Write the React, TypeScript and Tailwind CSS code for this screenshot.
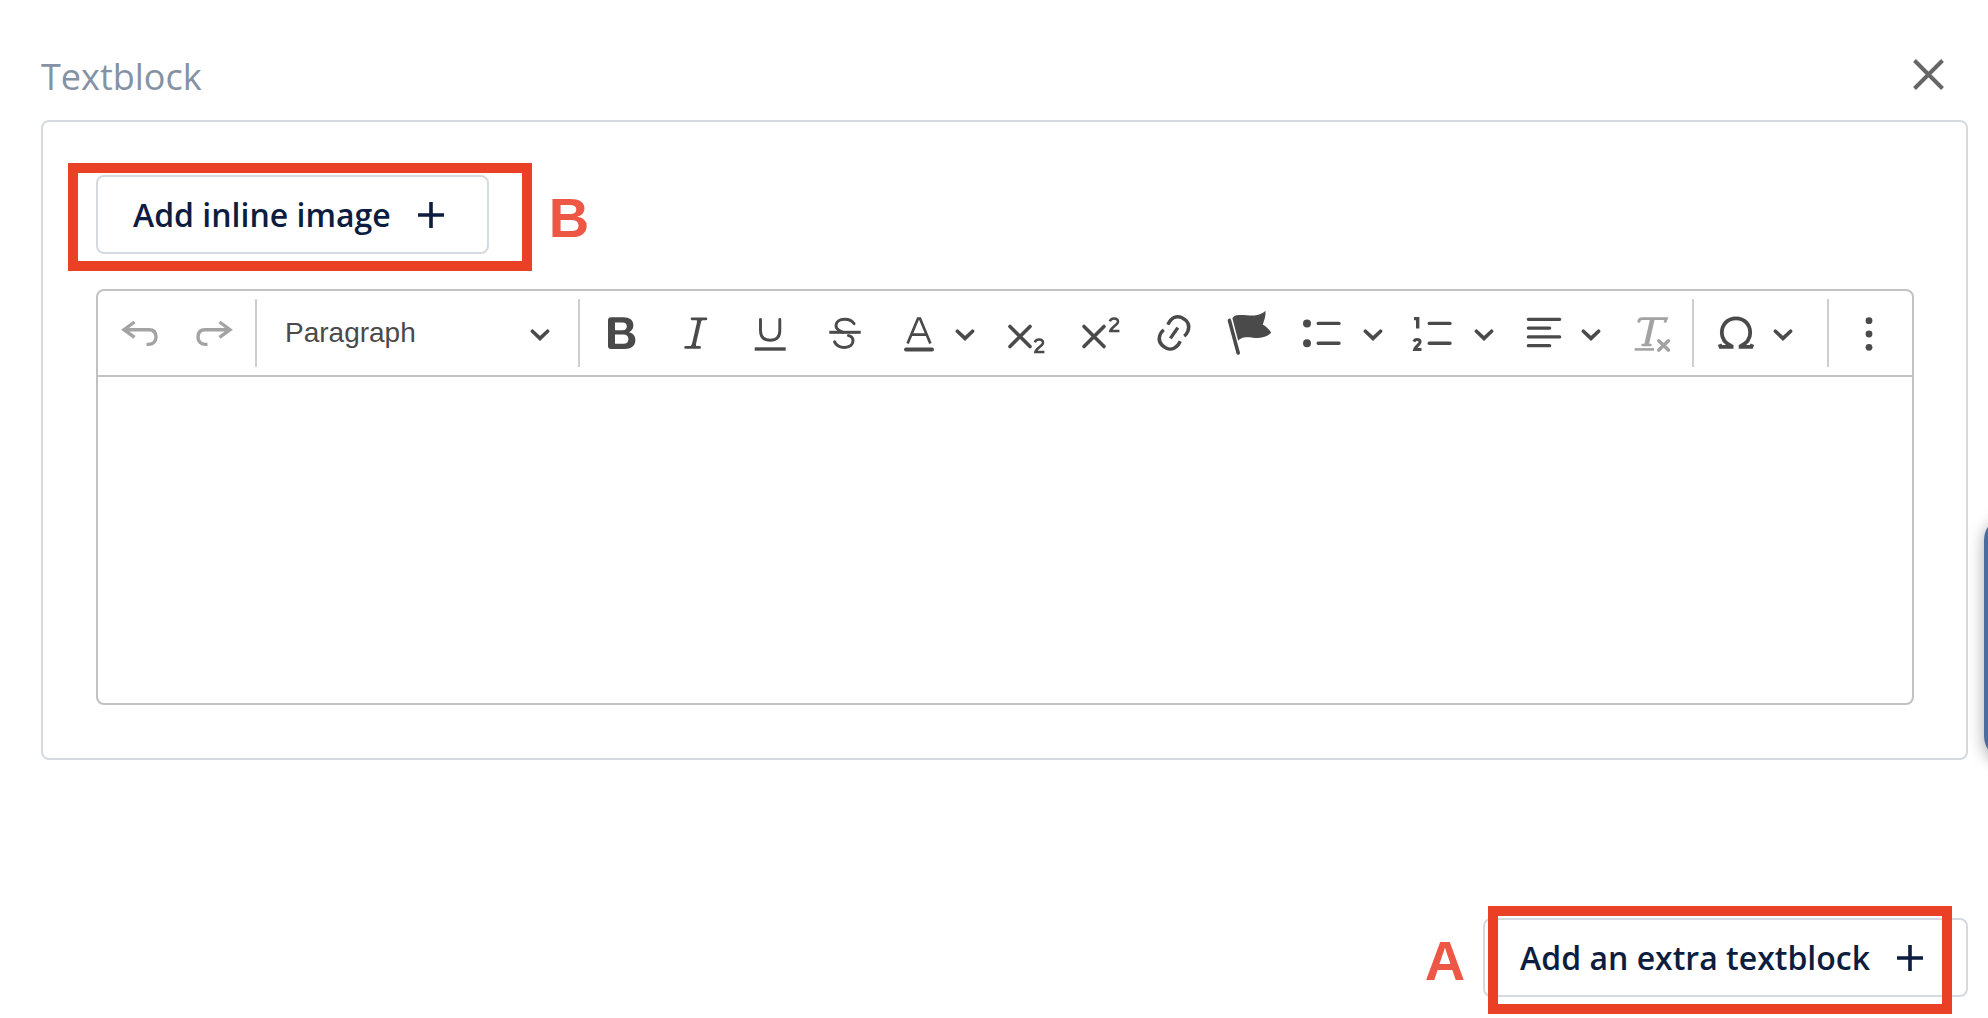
import { useState } from "react";
import type { ReactNode } from "react";
import clsx from "clsx";

const UNDO_PATH = "M20.5 15L10 22.7L20.5 30.4M11 22.7H35C40 22.7 42 26 42 30C42 34.5 39 37.4 34.5 37.4H32.5";

interface IconProps {
  children: ReactNode;
  className?: string;
}

function Icon({ children, className }: IconProps) {
  return (
    <svg
      viewBox="0 0 52 52"
      className={clsx("size-[52px] shrink-0", className)}
      fill="none"
      stroke="currentColor"
      strokeWidth={3.4}
      aria-hidden="true"
    >
      {children}
    </svg>
  );
}

function Chevron() {
  return (
    <svg
      viewBox="0 0 20 52"
      className="h-[52px] w-5 shrink-0"
      fill="none"
      stroke="currentColor"
      strokeWidth={3.6}
      strokeLinecap="round"
      aria-hidden="true"
    >
      <path d="M2.4 24.2L10 31.4L17.6 24.2" />
    </svg>
  );
}

function PlusIcon() {
  return (
    <svg viewBox="0 0 26 26" className="size-[26px] shrink-0" stroke="currentColor" strokeWidth={3.6} aria-hidden="true">
      <path d="M13 0V26M0 13H26" />
    </svg>
  );
}

interface ToolProps {
  label: string;
  children: ReactNode;
  disabled?: boolean;
  wide?: boolean;
}

function Tool({ label, children, disabled, wide }: ToolProps) {
  return (
    <button
      type="button"
      aria-label={label}
      disabled={disabled}
      className={clsx(
        "flex h-[68px] shrink-0 items-center justify-center",
        wide ? "w-[78px]" : "w-[74px]",
        disabled ? "text-[#a3a3a3]" : "text-[#4a4a4a]"
      )}
    >
      {children}
    </button>
  );
}

function SplitTool({ label, children, wide }: ToolProps) {
  return (
    <div className="flex shrink-0">
      <Tool label={label} wide={wide}>
        {children}
      </Tool>
      <button
        type="button"
        aria-label={`${label} options`}
        className={clsx("flex h-[68px] items-center text-[#4a4a4a]", wide ? "w-[33px]" : "w-[34px]")}
      >
        <Chevron />
      </button>
    </div>
  );
}

function Toolbar() {
  const [format, setFormat] = useState("Paragraph");

  return (
    <div className="flex h-[86px] items-center border-b-2 border-[#c2c2c2] text-[#4a4a4a]">
      {/* History */}
      <div className="flex pr-1 pl-[5px]">
        <Tool label="Undo" disabled>
          <Icon>
            <path d={UNDO_PATH} />
          </Icon>
        </Tool>
        <Tool label="Redo" disabled>
          <Icon className="-scale-x-100">
            <path d={UNDO_PATH} />
          </Icon>
        </Tool>
      </div>

      {/* Block format */}
      <div className="relative h-[68px] w-[323px] shrink-0 border-l-2 border-[#cdcdd2]">
        <select
          aria-label="Block format"
          value={format}
          onChange={(e) => setFormat(e.target.value)}
          className="h-full w-full appearance-none bg-transparent pl-7 font-['Liberation_Sans',sans-serif] text-[28px] focus:outline-none"
        >
          <option>Paragraph</option>
          <option>Heading 1</option>
          <option>Heading 2</option>
        </select>
        <span className="pointer-events-none absolute inset-y-0 right-7 flex items-center">
          <Chevron />
        </span>
      </div>

      {/* Formatting */}
      <div className="flex border-l-2 border-[#cdcdd2] pl-[5px] pr-[3px]">
        <Tool label="Bold">
          <Icon>
            <path
              d="M15 10.3H27.5C33.5 10.3 37.4 13 37.4 18.3C37.4 21.6 35.8 24 33 25.2C37 26.2 39.4 29 39.4 33C39.4 39 35 42 28.6 42H15Q12 42 12 39V13.3Q12 10.3 15 10.3ZM19 15.4V23.2H26.6C29.4 23.2 30.8 21.8 30.8 19.3S29.4 15.4 26.6 15.4ZM19 27.6V36.8H27.4C30.6 36.8 32.4 35.2 32.4 32.2S30.6 27.6 27.4 27.6Z"
              fill="currentColor"
              fillRule="evenodd"
              stroke="none"
            />
          </Icon>
        </Tool>
        <Tool label="Italic">
          <Icon>
            <path d="M22 11.8H36M15.6 40.4H29.6" strokeWidth={2.7} strokeLinecap="round" />
            <path d="M26 12H33.6C31.8 13 31.2 14 30.8 16L26.2 36C25.8 38 26 39.4 27 40.4H18.4C20.6 39.6 21.6 38.4 22.2 36L26.8 16C27.2 14 27 13 26 12Z" fill="currentColor" stroke="none" />
          </Icon>
        </Tool>
        <Tool label="Underline">
          <Icon>
            <path d="M16.5 12.4V23.5C16.5 29.8 20 33.2 26.2 33.2S35.8 29.8 35.8 23.5V12.4" strokeWidth={2.9} strokeLinecap="round" />
            <path d="M10.7 42H41.7" />
          </Icon>
        </Tool>
        <Tool label="Strikethrough">
          <Icon>
            <path d="M36 16.6C34.2 13.6 30.6 12.2 26.6 12.2C21.6 12.2 18 14.8 18 18.6C18 21.6 20 23.8 25 25.4M30.5 28.6C33.6 29.2 35 31 35 33.6C35 37.8 31.4 40.4 26.6 40.4C22 40.4 18.2 38.4 16.6 34.8" strokeWidth={3} strokeLinecap="round" />
            <path d="M11.3 25.3H42.7" strokeWidth={3} />
          </Icon>
        </Tool>
        <SplitTool label="Text color">
          <Icon>
            <path d="M15.6 36.6L26 11.6H28L38.4 36.6M18.6 27.6H35.4" strokeWidth={2.7} />
            <path d="M14 42.6H40" strokeWidth={4} strokeLinecap="round" />
          </Icon>
        </SplitTool>
        <Tool label="Subscript">
          <Icon>
            <path d="M10 19.5L30 39.5M30 19.5L10 39.5" strokeWidth={3.6} strokeLinecap="round" />
            <path d="M34.8 35.4C35.4 33.4 36.8 32.5 39 32.5C41.4 32.5 43 33.8 43 35.8C43 39 36.4 41 35.4 45H44.4" strokeWidth={2.5} />
          </Icon>
        </Tool>
        <Tool label="Superscript">
          <Icon>
            <path d="M10 19.5L30 39.5M30 19.5L10 39.5" strokeWidth={3.6} strokeLinecap="round" />
            <path d="M35.8 14.4C36.4 12.4 37.8 11.5 40 11.5C42.4 11.5 44 12.8 44 14.8C44 18 37.4 20 36.4 24H45.4" strokeWidth={2.5} />
          </Icon>
        </Tool>
        <Tool label="Insert link">
          <Icon>
            <path d="M19.8 17.6C23 10.6 28.6 8 34 10.8C40 14 42 19 39.8 24.4C39 26.4 37.6 28.2 36.2 29.2M32.3 34.2C29 41.2 23.4 43.8 18 41C12 37.8 10 32.8 12.2 27.4C13 25.4 14.4 23.8 15.8 22.8M29.8 20.6L22.4 31.4" strokeWidth={3.4} />
          </Icon>
        </Tool>
        <Tool label="Anchor">
          <Icon>
            <path d="M7.4 13.4L16.2 46" strokeWidth={3.6} strokeLinecap="round" />
            <path d="M10.4 11.2C11.8 9 13.6 8.2 16.6 8C22.6 7.4 31.4 9.8 37 7.6C39.8 6.6 41.8 5.4 43.4 3.8C44 9.4 42.2 13.2 40.8 17.6C43.6 19.4 47.4 22.4 49.2 25.6C47.2 28.2 43.6 29.8 39.8 30.6C33.6 31.8 27.6 29.2 21.8 30.6C19.4 31.2 17.6 32.2 16.2 33.8Z" fill="currentColor" stroke="none" />
          </Icon>
        </Tool>
        <SplitTool label="Bullet list" wide>
          <Icon>
            <circle cx="9" cy="16.4" r="4" fill="currentColor" stroke="none" />
            <circle cx="9" cy="36.3" r="4" fill="currentColor" stroke="none" />
            <path d="M20.2 16.4H41M20.2 36.3H41" strokeLinecap="round" />
          </Icon>
        </SplitTool>
        <SplitTool label="Numbered list" wide>
          <Icon>
            <path d="M20.2 16.4H41M20.2 36.3H41" strokeLinecap="round" />
            <path d="M5 11.6H8.7V21.5" strokeWidth={3.4} />
            <path d="M4.9 34.6C5.5 33 6.5 32.6 8.1 32.6C9.9 32.6 11.1 33.4 11.1 35C11.1 37.4 6.7 39.2 5.7 42.4H12.5" strokeWidth={3} />
          </Icon>
        </SplitTool>
        <SplitTool label="Align">
          <Icon>
            <path d="M10.3 12.3H41.7M10.3 21.1H31.7M10.3 29.9H41.7M10.3 38.7H31.7" strokeWidth={3.2} strokeLinecap="round" />
          </Icon>
        </SplitTool>
        <Tool label="Clear formatting" disabled>
          <Icon>
            <path d="M12.6 15.6C12.8 12.8 13.6 11.6 16 11.6H40.4L38.8 15.6" strokeWidth={2.8} />
            <path d="M26.4 12L20.6 37.6" strokeWidth={4.6} />
            <path d="M16.6 38H24.4" strokeWidth={2.6} strokeLinecap="round" />
            <path d="M8.7 42.4H28" strokeWidth={2.6} />
            <path d="M32.8 33.8L42.4 43M42.4 33.8L32.8 43" strokeWidth={3.6} strokeLinecap="round" />
          </Icon>
        </Tool>
      </div>

      {/* Special characters */}
      <div className="flex border-l-2 border-[#cdcdd2] pl-[5px] pr-5">
        <SplitTool label="Special character">
          <Icon>
            <path d="M9.6 37.2L10.6 39.8H21.6V39.2C14.6 36 11.8 31.4 11.8 25.8C11.8 17.4 17.8 11.4 26 11.4S40.2 17.4 40.2 25.8C40.2 31.4 37.4 36 30.6 39.2V39.8H41.4L42.4 37.2" strokeWidth={3.8} />
          </Icon>
        </SplitTool>
      </div>

      {/* Overflow */}
      <div className="flex grow border-l-2 border-[#cdcdd2] pl-[3px]">
        <Tool label="More">
          <Icon>
            <g fill="currentColor" stroke="none">
              <circle cx="26" cy="13.7" r="3.4" />
              <circle cx="26" cy="27" r="3.4" />
              <circle cx="26" cy="40.3" r="3.4" />
            </g>
          </Icon>
        </Tool>
      </div>
    </div>
  );
}

interface AddButtonProps {
  label: string;
}

function AddButton({ label }: AddButtonProps) {
  return (
    <button
      type="button"
      className="flex h-[79px] items-center gap-[27px] rounded-lg border-2 border-[#d5dae0] bg-white pl-[35px] pr-[43px] text-[32px] font-semibold whitespace-nowrap text-[#0c1d40]"
    >
      {label}
      <PlusIcon />
    </button>
  );
}

export default function App() {
  const [content, setContent] = useState("");

  return (
    <div className="relative overflow-hidden bg-white pt-11 pr-5 pb-[21px] pl-[41px] font-['Open_Sans',sans-serif]">
      <header className="flex h-[76px] items-start justify-between pr-6">
        <h1 className="text-[36px] leading-[66px] text-[#8592a3]">Textblock</h1>
        <button type="button" aria-label="Close" className="mt-[15px] text-[#666666]">
          <svg viewBox="0 0 31 31" className="size-[31px]" stroke="currentColor" strokeWidth={4} aria-hidden="true">
            <path d="M1.5 1.5L29.5 29.5M29.5 1.5L1.5 29.5" />
          </svg>
        </button>
      </header>

      <main>
        <section className="rounded-lg border-2 border-[#d5dae0] py-[53px] pr-[52px] pl-[53px]">
          <div className="flex items-center gap-15">
            <div className="relative">
              <AddButton label="Add inline image" />
              <div className="pointer-events-none absolute -top-3 -left-7 h-[108px] w-[464px] border-10 border-[#ea4025]" />
            </div>
            <span className="pt-1.5 font-['Liberation_Sans',sans-serif] text-[56px] leading-[72px] font-bold text-[#ec5746]">B</span>
          </div>

          <div className="mt-[35px] rounded-lg border-2 border-[#c2c2c2]">
            <Toolbar />
            <textarea
              aria-label="Textblock content"
              value={content}
              onChange={(e) => setContent(e.target.value)}
              className="block h-[326px] w-full resize-none rounded-b-lg bg-transparent p-6 text-[28px] focus:outline-none"
            />
          </div>
        </section>

        <div className="mt-[158px] flex items-center justify-end gap-[18px]">
          <span className="pt-1.5 font-['Liberation_Sans',sans-serif] text-[56px] leading-[72px] font-bold text-[#ec5746]">A</span>
          <div className="relative">
            <AddButton label="Add an extra textblock" />
            <div className="pointer-events-none absolute -top-3 left-[5px] h-[108px] w-[464px] border-10 border-[#ea4025]" />
          </div>
        </div>
      </main>

      {/* Side tab peeking in from the window edge */}
      <div className="absolute top-[516px] -right-11 h-[244px] w-12 rounded-[28px] bg-[#4a6c9f] shadow-[0_4px_16px_rgba(0,0,0,0.35)]" />
    </div>
  );
}
